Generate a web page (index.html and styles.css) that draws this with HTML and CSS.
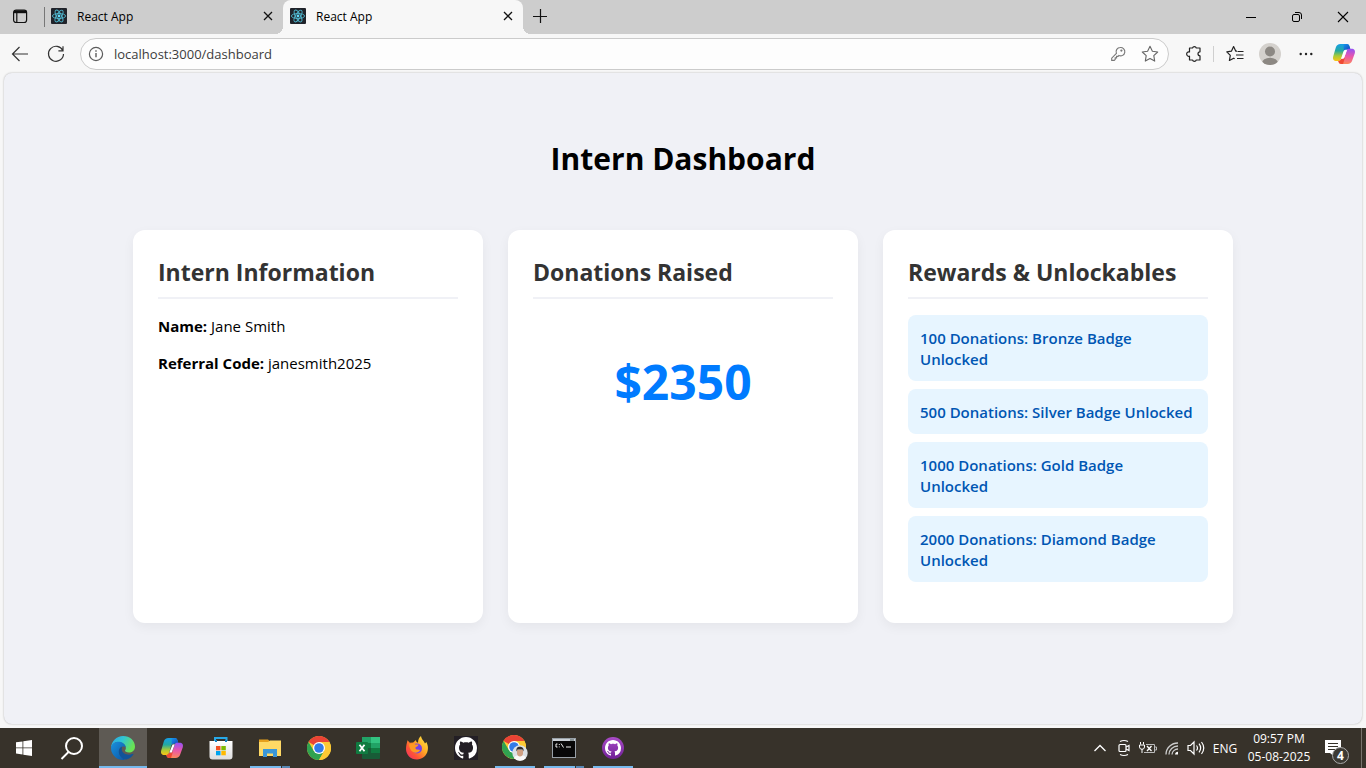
FILE: index.html
```html
<!DOCTYPE html>
<html lang="en">
<head>
<meta charset="utf-8">
<meta name="viewport" content="width=device-width, initial-scale=1">
<title>React App</title>
<link rel="stylesheet" href="styles.css">
</head>
<body>
<svg class="defs" width="0" height="0" aria-hidden="true">
  <defs>
    <linearGradient id="cp-left" x1="0" y1="0" x2="0" y2="1"><stop offset="0" stop-color="#169fe8"/><stop offset=".4" stop-color="#24a9a0"/><stop offset=".7" stop-color="#a9cb37"/><stop offset="1" stop-color="#fbc516"/></linearGradient>
    <linearGradient id="cp-right" x1=".3" y1="0" x2=".2" y2="1"><stop offset="0" stop-color="#9b52f0"/><stop offset=".45" stop-color="#e856ac"/><stop offset="1" stop-color="#ff8a55"/></linearGradient>
    <linearGradient id="cp-top" x1="0" y1="0" x2="1" y2="1"><stop offset="0" stop-color="#1597ea"/><stop offset="1" stop-color="#153bbb"/></linearGradient>
    <linearGradient id="edge-blue" x1="0" y1="0" x2="1" y2="1"><stop offset="0" stop-color="#1a91dd"/><stop offset="1" stop-color="#0b56a6"/></linearGradient>
    <linearGradient id="edge-green" x1="0" y1="0" x2="1" y2=".4"><stop offset="0" stop-color="#2aa4e7"/><stop offset=".5" stop-color="#31c6d3"/><stop offset="1" stop-color="#69e354"/></linearGradient>
    <linearGradient id="fox-body" x1="1" y1="0" x2="0" y2="1"><stop offset="0" stop-color="#fff04d"/><stop offset=".4" stop-color="#ffab25"/><stop offset=".7" stop-color="#ff5435"/><stop offset="1" stop-color="#ef2671"/></linearGradient>
    <linearGradient id="gh-purple" x1="0" y1="0" x2="0" y2="1"><stop offset="0" stop-color="#a94bc8"/><stop offset="1" stop-color="#702096"/></linearGradient>
    <linearGradient id="store-bag" x1="0" y1="0" x2="0" y2="1"><stop offset="0" stop-color="#fff"/><stop offset="1" stop-color="#dddddd"/></linearGradient>
    <symbol id="react" viewBox="0 0 16 16">
      <rect width="16" height="16" rx="1" fill="#20232a"/>
      <g fill="none" stroke="#4fb5cc" stroke-width=".9"><ellipse cx="8" cy="8" rx="6.6" ry="2.5"/><ellipse cx="8" cy="8" rx="6.6" ry="2.5" transform="rotate(60 8 8)"/><ellipse cx="8" cy="8" rx="6.6" ry="2.5" transform="rotate(120 8 8)"/></g>
      <circle cx="8" cy="8" r="1.4" fill="#61dafb"/>
    </symbol>
    <symbol id="close" viewBox="0 0 10 10"><path d="M1 1l8 8M9 1L1 9" fill="none" stroke="#111" stroke-width="1.3"/></symbol>
    <symbol id="copilot" viewBox="0 0 24 24">
      <path d="M8.500 2h6.200c1.500 0 2.300.8 2.700 2l1 3.400h-4.200c-1.400 0-2.300.7-2.800 2.100L9 17c-.5 1.400-1.400 2-2.700 2H4.600C1.500 19 .5 17 1.200 14.500l2.600-9C4.500 3.200 6 2 8.500 2z" fill="url(#cp-left)"/>
      <path d="M11.500 2h3.200c1.500 0 2.300.8 2.700 2l1 3.400h-4.200c-1 0-1.900.5-2.400 1.400z" fill="url(#cp-top)"/>
      <path d="M15.500 22H9.300c-1.500 0-2.300-.8-2.700-2l-.3-1.100c1.300 0 2.200-.6 2.700-2h.8c1.400 0 2.300-.7 2.800-2.100L15 8c.4-1 1.200-1.300 2.300-1.300h2.100c3.100 0 4.100 2 3.400 4.500l-2.600 7.300C19.500 20.800 18 22 15.500 22z" fill="url(#cp-right)"/>
      <path d="M12.500 8.600l2.300-.3-3 8.300-2.600.2z" fill="#fff"/>
      <path d="M6.300 18.900c1.700 0 2.600-.7 3.100-2.100l1.900.1 1.600-1.300-1.800 6.400H9.300c-1.500 0-2.300-.8-2.700-2z" fill="#ef4934"/>
    </symbol>
    <symbol id="chrome" viewBox="0 0 24 24">
      <circle cx="12" cy="12" r="12" fill="#fcc934"/>
      <path d="M12 12L1.600 6A12 12 0 0 1 22.400 6H12z" fill="#ea4335"/>
      <path d="M1.600 6A12 12 0 0 0 12 24l5.200-9L12 12 6.800 15z" fill="#30a250"/>
      <path d="M12 6h10.400A12 12 0 0 1 12 24l5.200-9z" fill="#fcc934"/>
      <circle cx="12" cy="12" r="6" fill="#fff"/><circle cx="12" cy="12" r="4.800" fill="#327ae8"/>
    </symbol>
    <symbol id="github" viewBox="0 0 16 16"><path d="M8 0C3.580 0 0 3.580 0 8c0 3.540 2.290 6.530 5.470 7.590.4.070.55-.17.55-.38 0-.19-.01-.82-.01-1.490-2.010.37-2.530-.49-2.690-.94-.09-.23-.48-.94-.82-1.130-.28-.15-.68-.52-.01-.53.63-.01 1.080.58 1.230.82.72 1.210 1.870.87 2.330.66.07-.52.28-.87.51-1.070-1.780-.2-3.640-.89-3.640-3.950 0-.87.31-1.590.82-2.150-.08-.2-.36-1.020.08-2.120 0 0 .67-.21 2.200.82.64-.18 1.320-.27 2-.27s1.360.09 2 .27c1.530-1.040 2.200-.82 2.200-.82.44 1.100.16 1.920.08 2.120.51.56.82 1.270.82 2.150 0 3.070-1.870 3.750-3.650 3.950.29.25.54.73.54 1.480 0 1.070-.01 1.930-.01 2.200 0 .21.15.46.55.38A8.010 8.010 0 0 0 16 8c0-4.420-3.580-8-8-8z" fill="#fff"/></symbol>
  </defs>
</svg>

<div class="desktop">
  <header class="tab-strip">
    <button class="tab-menu" aria-label="Tab actions">
      <svg width="16" height="16" viewBox="0 0 16 16" fill="none" stroke="#111" stroke-width="1.200"><rect x="1.600" y="2" width="13" height="12.500" rx="2.500"/><path d="M2 3.700h12.200" stroke-width="3"/><path d="M4.800 5v9.500"/></svg>
    </button>
    <div class="tab">
      <svg width="16" height="16"><use href="#react"/></svg>
      <span class="tab-title">React App</span>
      <button class="tab-close" aria-label="Close tab"><svg width="10" height="10"><use href="#close"/></svg></button>
    </div>
    <div class="tab tab-active">
      <svg width="16" height="16"><use href="#react"/></svg>
      <span class="tab-title">React App</span>
      <button class="tab-close" aria-label="Close tab"><svg width="10" height="10"><use href="#close"/></svg></button>
    </div>
    <button class="new-tab" aria-label="New tab"><svg width="14" height="14" viewBox="0 0 14 14"><path d="M7.500 0v14M0 7.500h14" stroke="#111" stroke-width="1.200"/></svg></button>
    <div class="window-controls">
      <button aria-label="Minimize"><svg width="12" height="12" viewBox="0 0 12 12"><path d="M1 6.500h10" stroke="#000"/></svg></button>
      <button aria-label="Restore"><svg width="12" height="12" viewBox="0 0 12 12" fill="none" stroke="#000"><rect x="1.500" y="3.500" width="7" height="7" rx="1.500"/><path d="M4 1.500h4a2.500 2.500 0 0 1 2.500 2.500v4"/></svg></button>
      <button aria-label="Close"><svg width="12" height="12" viewBox="0 0 12 12"><path d="M1 1l10 10M11 1L1 11" stroke="#000" stroke-width="1.100"/></svg></button>
    </div>
  </header>

  <nav class="toolbar" aria-label="Browser toolbar">
    <button class="nav-button" aria-label="Back"><svg width="18" height="16" viewBox="0 0 18 16" fill="none" stroke="#333" stroke-width="1.200"><path d="M17 8H1.500M8.500 1l-7 7 7 7"/></svg></button>
    <button class="nav-button" aria-label="Refresh"><svg width="18" height="18" viewBox="0 0 18 18" fill="none" stroke="#333" stroke-width="1.200"><path d="M15.800 5.600A7.500 7.500 0 1 0 16.500 9M16 1.200v4.600h-4.600"/></svg></button>
    <div class="address-bar">
      <svg width="16" height="16" viewBox="0 0 16 16" fill="none" stroke="#5c5c5c" stroke-width="1.200"><circle cx="8" cy="8" r="6.600"/><path d="M8 7v4.300M8 4.300v1.500" stroke-width="1.400"/></svg>
      <input class="address-input" type="text" aria-label="Address" value="localhost:3000/dashboard">
      <button class="address-action" aria-label="Passwords"><svg width="16" height="16" viewBox="0 0 16 16" fill="none" stroke="#777" stroke-width="1.100"><path d="M10.200 1.500a4.200 4.200 0 1 1-1.300 8L8 10.400H6.600v1.500H5.200v1.500l-1 1H1.700v-2.300L6.400 7.300a4.200 4.200 0 0 1 3.800-5.800z"/><circle cx="11.400" cy="4.600" r=".6"/></svg></button>
      <button class="address-action" aria-label="Add to favorites"><svg width="18" height="18" viewBox="0 0 18 18" fill="none" stroke="#666" stroke-width="1.100" stroke-linejoin="round"><path d="M9 1.300l2.400 4.900 5.300.8-3.900 3.700.9 5.400L9 13.500l-4.700 2.600.9-5.400L1.300 7l5.300-.8z"/></svg></button>
    </div>
    <div class="toolbar-actions">
      <button class="tool" aria-label="Extensions"><svg width="18" height="18" viewBox="0 0 18 18" fill="none" stroke="#222" stroke-width="1.200" stroke-linejoin="round"><path d="M4.500 3h3a2 2 0 0 1 3.800 0H15v3.800a2 2 0 1 0 0 4V15h-3.700a2 2 0 0 1-3.800 0h-3v-3.800a2.200 2.200 0 1 1 0-4.200z"/></svg></button>
      <button class="tool tool-divided" aria-label="Favorites"><svg width="18" height="18" viewBox="0 0 18 18" fill="none" stroke="#222" stroke-width="1.200" stroke-linejoin="round"><path d="M11 6.200H9.800L7.600 1.500 5.400 6.200l-4.600.7 3.500 3.500-.9 5.100 4.300-2.300 1 .5M11.500 6.500h6M10 10h7.500M11 13.500h6.500"/></svg></button>
      <button class="tool" aria-label="Profile"><svg width="22" height="22" viewBox="0 0 22 22"><clipPath id="avatar"><circle cx="11" cy="11" r="11"/></clipPath><circle cx="11" cy="11" r="11" fill="#d4d1cd"/><g clip-path="url(#avatar)" fill="#8c8883"><circle cx="11" cy="8.500" r="5"/><ellipse cx="11" cy="20" rx="8" ry="5.300"/></g></svg></button>
      <button class="tool" aria-label="Settings and more"><svg width="14" height="14" viewBox="0 0 14 14" fill="#222"><circle cx="1.700" cy="7" r="1.200"/><circle cx="7" cy="7" r="1.200"/><circle cx="12.300" cy="7" r="1.200"/></svg></button>
      <button class="tool" aria-label="Copilot"><svg width="24" height="24"><use href="#copilot"/></svg></button>
    </div>
  </nav>

  <div class="viewport">
    <main class="dashboard">
      <h1 class="page-title">Intern Dashboard</h1>
      <div class="cards">
        <section class="card">
          <h2 class="card-title">Intern Information</h2>
          <p class="info"><strong>Name:</strong> Jane Smith</p>
          <p class="info"><strong>Referral Code:</strong> janesmith2025</p>
        </section>
        <section class="card">
          <h2 class="card-title">Donations Raised</h2>
          <p class="amount">$2350</p>
        </section>
        <section class="card">
          <h2 class="card-title">Rewards &amp; Unlockables</h2>
          <ul class="rewards">
            <li class="reward">100 Donations: Bronze Badge Unlocked</li>
            <li class="reward">500 Donations: Silver Badge Unlocked</li>
            <li class="reward">1000 Donations: Gold Badge<br>Unlocked</li>
            <li class="reward">2000 Donations: Diamond Badge Unlocked</li>
          </ul>
        </section>
      </div>
    </main>
  </div>

  <footer class="taskbar">
    <div class="launchers">
      <button class="launcher" aria-label="Start"><svg width="16" height="16" viewBox="0 0 16 16" fill="#fff"><path d="M0 2.300L6.500 1.400v6.100H0zM7.300 1.300L16 0v7.500H7.300zM0 8.300h6.500v6.100L0 13.500zM7.300 8.300H16V16l-8.700-1.300z"/></svg></button>
      <button class="launcher" aria-label="Search"><svg width="24" height="24" viewBox="0 0 24 24" fill="none" stroke="#fff" stroke-width="2"><circle cx="14" cy="10" r="8"/><path d="M8.500 16L1.500 23"/></svg></button>
    </div>
    <div class="apps">
      <button class="launcher app-focused" aria-label="Microsoft Edge"><svg width="24" height="24" viewBox="0 0 24 24">
        <path d="M0 12C.3 5 5.500 0 12 0c7 0 12 4.800 12 10.500 0 4-3 6-6 6-2.800 0-4-1-4-1.900 0-.6.900-1 .9-2.600 0-3-3.300-6-7.900-6-3 0-5.500 1.700-7 6z" fill="url(#edge-green)"/>
        <path d="M0 12c.6-4 3.500-6.200 7.500-6.200 4 0 7 2.700 7.200 5.500C13.500 9.800 9 9.800 8 14c-.8 4 2.200 7.500 6 9.800A12 12 0 0 1 0 12z" fill="url(#edge-blue)"/>
        <path d="M11 10.500c-2.600 1.300-3.700 4-3 6.800.8 3.400 4 6.700 7.500 6.200 3-.8 5-2.500 6.900-5.100.3-.5-.1-.9-.6-.6-4.600 2.200-10.700.2-11-4.300 0-1.300.3-2.200.2-3z" fill="#115499"/>
      </svg></button>
      <button class="launcher" aria-label="Copilot"><svg width="24" height="24"><use href="#copilot"/></svg></button>
      <button class="launcher" aria-label="Microsoft Store"><svg width="24" height="24" viewBox="0 0 24 24"><path d="M6 6V2h11.500v4" fill="none" stroke="#27a9e7" stroke-width="2"/><path d="M.5 5h23v15.500a3 3 0 0 1-3 3h-17a3 3 0 0 1-3-3z" fill="url(#store-bag)"/><path d="M6 4h2v2H6zM16 4h2v2h-2z" fill="#1685c4"/><path d="M7 10h4.500v4.300H7z" fill="#f25022"/><path d="M12.300 10h4.500v4.300h-4.500z" fill="#7fba00"/><path d="M7 15h4.500v4.300H7z" fill="#00a4ef"/><path d="M12.300 15h4.500v4.300h-4.500z" fill="#ffb900"/></svg></button>
      <button class="launcher app-open app-stacked" aria-label="File Explorer"><svg width="24" height="24" viewBox="0 0 24 24"><path d="M1 3.500h9l2 2v3H1z" fill="#e6a01c"/><path d="M1 6h9l2-1.500h11v15.500H1z" fill="#ffd965"/><path d="M5 13h14v8h-4v-3.500H9V21H5z" fill="#3b97d8"/></svg></button>
      <button class="launcher" aria-label="Google Chrome"><svg width="24" height="24"><use href="#chrome"/></svg></button>
      <button class="launcher" aria-label="Excel"><svg width="24" height="24" viewBox="0 0 24 24"><rect x="6" y="1" width="18" height="22" rx="1" fill="#185c37"/><path d="M6 1h9v6H6z" fill="#21a366"/><path d="M15 1h9v6h-9z" fill="#33c481"/><path d="M6 7h9v5H6z" fill="#107c41"/><path d="M15 7h9v5h-9z" fill="#21a366"/><path d="M15 12h9v5h-9z" fill="#107c41"/><rect y="6" width="12" height="12" rx="1" fill="#107c41"/><path d="M3.500 8.700l5 6.600M8.500 8.700l-5 6.600" stroke="#fff" stroke-width="1.800"/></svg></button>
      <button class="launcher" aria-label="Firefox"><svg width="24" height="24" viewBox="0 0 24 24"><path d="M2.500 4.200l2.300 2.500 3.400-.2L11 4c0 1.500.6 2.200 2 2.700C13.200 3.500 14 1.600 16 0c.6 3.600 2.800 4.400 4 7.500l1.400-1.500c1.500 3 1.800 5.500 1.400 8C21.800 20 17 23.500 12 23.500 5.500 23.500 1 18.700 1 13c0-3 .8-6 1.500-8.800z" fill="url(#fox-body)"/><circle cx="12" cy="12.500" r="5" fill="#7542e5"/><path d="M4 8.500c3-1.800 5-1 6.500 0h3c-.3 2-2.500 2-3 3-.2 1.500.5 2 2 2 1 0 1.800.3 2.600.5-1.600 3-5.600 3.500-8.100 1.300C5.500 14 4.500 12 4 8.500z" fill="#ff9a23"/></svg></button>
      <button class="launcher" aria-label="GitHub"><svg width="24" height="24" viewBox="0 0 24 24"><rect width="24" height="24" fill="#231f25"/><use href="#github" x="1" y="1" width="22" height="22"/></svg></button>
      <button class="launcher app-open" aria-label="Google Chrome profile"><svg width="26" height="26" viewBox="0 0 26 26"><use href="#chrome" width="24" height="24"/><circle cx="18" cy="18" r="7.700" fill="#dce1e5"/><path d="M12 23c.7-2.300 3-3 6-3s5 .7 6 3a7.700 7.700 0 0 1-12 0z" fill="#f9f9f9"/><path d="M15 15h6v3.500c0 4-6 4-6 0z" fill="#d0a184"/><path d="M14.500 16.500c-.6-4 1.500-5 4-4.700 2.400.2 3.500 2 3 4.700l-1-2h-5z" fill="#302b2b"/></svg></button>
      <button class="launcher app-open app-stacked" aria-label="Command Prompt"><svg width="24" height="20" viewBox="0 0 24 20"><rect x=".5" y=".5" width="23" height="19" fill="#080808" stroke="#98a0a7"/><path d="M1 1h22v2H1z" fill="#cbd1d6"/><path d="M18 2h4" stroke="#455" /><path d="M5.500 6H4v3h1.500M7.300 6v1M7.300 8.500v.8M9 5.500l2.500 4M14 9h5" fill="none" stroke="#eee"/></svg></button>
      <button class="launcher app-open" aria-label="GitHub Desktop"><svg width="24" height="24" viewBox="0 0 24 24"><circle cx="12" cy="12" r="11" fill="url(#gh-purple)"/><use href="#github" x="4" y="4" width="16" height="16"/></svg></button>
    </div>
    <div class="tray">
      <button class="tray-button" aria-label="Show hidden icons"><svg width="14" height="14" viewBox="0 0 14 14"><path d="M1.500 10L7 4.500l5.500 5.500" fill="none" stroke="#fff" stroke-width="1.300"/></svg></button>
      <button class="tray-button" aria-label="Meet Now"><svg width="16" height="18" viewBox="0 0 16 18" fill="none" stroke="#fff" stroke-width="1.200"><rect x="3" y="5.500" width="7" height="7" rx="1"/><path d="M10 8l3-1.500v5L10 10M4 2.500Q8 .500 12 2.500M4 15.500q4 2 8 0"/></svg></button>
      <button class="tray-button" aria-label="Battery"><svg width="18" height="14" viewBox="0 0 18 14" fill="none" stroke="#fff"><path d="M1.500 1v2.500M4.500 1v2.500M.5 4h5v2A2.500 2.500 0 0 1 3 8.300 2.500 2.500 0 0 1 .5 6zM3 8v4"/><path d="M7 3.500h8.500v8H5M16 6h1.500v3H16" stroke="#bbb"/><path d="M8 5l4.500 5M12.500 5L8 10" stroke-width="1.300"/></svg></button>
      <button class="tray-button" aria-label="Network"><svg width="16" height="16" viewBox="0 0 16 16" fill="none"><path d="M2 14.500C2 8 7.500 3 14 3M5 14.500C5 10 9 6 14 6M8 14.500c0-3 2.800-5.500 6-5.500" stroke="#ccc" stroke-width="1.300"/><path d="M11 14.500c0-1.500 1.300-2.700 3-2.700v2.700z" fill="#fff"/></svg></button>
      <button class="tray-button" aria-label="Volume"><svg width="18" height="16" viewBox="0 0 18 16" fill="none" stroke="#fff" stroke-width="1.200"><path d="M1 5.500h2.500L7 2v12l-3.500-3.500H1zM9.500 5.500q2 2.500 0 5M12 3.700q3.300 4.300 0 8.600M14.500 2q4.500 6 0 12"/></svg></button>
      <button class="language">ENG</button>
      <button class="clock"><span>09:57 PM</span><span>05-08-2025</span></button>
      <button class="notifications" aria-label="4 notifications"><svg width="16" height="16" viewBox="0 0 16 16"><path d="M0 0h16v13H8.500v3L5 13H0z" fill="#fff"/><path d="M3 3.500h10M3 6.500h10M3 9.500h7" stroke="#36322a"/></svg><span class="badge">4</span></button>
    </div>
  </footer>
</div>
</body>
</html>
```
FILE: styles.css
```css
* {
  box-sizing: border-box;
}

body {
  margin: 0;
  font-family: "Open Sans", "Noto Sans", sans-serif;
  color: #000;
  background: #f7f7f7;
}

button {
  display: flex;
  align-items: center;
  justify-content: center;
  padding: 0;
  border: 0;
  background: none;
  color: inherit;
  font: inherit;
}

svg {
  display: block;
  flex-shrink: 0;
}

.defs {
  position: absolute;
}

.desktop {
  display: flex;
  flex-direction: column;
  min-height: 100vh;
}

/* Tab strip */
.tab-strip {
  display: flex;
  height: 34px;
  background: #cdcdcd;
}

.tab-menu {
  width: 44px;
  padding-right: 4px;
  height: 32px;
}

.tab {
  display: flex;
  align-items: center;
  gap: 10px;
  width: 239px;
  height: 34px;
  padding: 0 9px 2px 7px;
  font-size: 12px;
}

.tab:not(.tab-active) {
  background: linear-gradient(#777, #777) 0 7px / 1px 20px no-repeat;
}

.tab-title {
  flex: 1;
}

.tab-close {
  width: 12px;
  height: 16px;
}

.tab-active {
  position: relative;
  width: 240px;
  border-radius: 8px 8px 0 0;
  background: #f7f7f7;
}

.tab-active::before,
.tab-active::after {
  content: "";
  position: absolute;
  bottom: 0;
  width: 8px;
  height: 8px;
}

.tab-active::before {
  right: 100%;
  background: radial-gradient(circle at 0 0, transparent 8px, #f7f7f7 8px);
}

.tab-active::after {
  left: 100%;
  background: radial-gradient(circle at 100% 0, transparent 8px, #f7f7f7 8px);
}

.new-tab {
  width: 34px;
  height: 32px;
}

.window-controls {
  display: flex;
  margin-left: auto;
}

.window-controls button {
  width: 46px;
}

/* Toolbar */
.toolbar {
  display: flex;
  align-items: center;
  height: 39px;
  padding: 0 4px 0 2px;
}

.nav-button {
  width: 36px;
  height: 32px;
}

.address-bar {
  display: flex;
  flex: 1;
  align-items: center;
  height: 32px;
  margin-left: 6px;
  padding: 0 2px 0 7px;
  border: 1px solid #cbcbcb;
  border-radius: 16px;
  background: #fdfdfd;
}

.address-input {
  flex: 1;
  min-width: 0;
  padding: 0 0 0 10px;
  border: 0;
  outline: 0;
  background: none;
  color: #3c3c3c;
  font-family: inherit;
  font-size: 13px;
}

.address-action {
  width: 32px;
  height: 30px;
}

.toolbar-actions {
  display: flex;
  align-items: center;
  padding-left: 7px;
}

.tool {
  width: 36px;
  height: 32px;
}

.tool:first-child {
  width: 37px;
  padding-right: 2px;
}

.tool:last-child {
  width: 38px;
  padding-left: 2px;
}

.tool-divided {
  width: 39px;
  padding-left: 5px;
  background: linear-gradient(#cfcfcf, #cfcfcf) 0 8px / 1px 16px no-repeat;
}

/* Page */
.viewport {
  flex: 1;
  margin: 0 4px 4px;
  padding: 62px 20px;
  border-radius: 8px;
  background: #f0f1f6;
  box-shadow: 0 0 2px rgba(0, 0, 0, 0.3);
}

.dashboard {
  max-width: 1100px;
  margin: 0 auto;
}

.page-title {
  margin: 0 0 47px;
  text-align: center;
  font-size: 30px;
  line-height: 48px;
  font-weight: 700;
}

.cards {
  display: grid;
  grid-template-columns: repeat(3, 1fr);
  gap: 25px;
}

.card {
  min-width: 0;
  padding: 25px;
  border-radius: 12px;
  background: #fff;
  box-shadow: 0 4px 12px rgba(0, 0, 0, 0.05);
}

.card-title {
  margin: 0 0 16px;
  padding-bottom: 8px;
  border-bottom: 2px solid #f0f1f6;
  color: #333;
  font-size: 23px;
  line-height: 34px;
  font-weight: 700;
}

.info {
  margin: 0 0 15px;
  font-size: 15px;
  line-height: 22px;
}

.amount {
  margin: 51px 0;
  color: #007bff;
  text-align: center;
  font-size: 48px;
  line-height: 64px;
  font-weight: 700;
}

.rewards {
  display: grid;
  gap: 8px;
  margin: 0 0 16px;
  padding: 0;
  list-style: none;
}

.reward {
  padding: 13px 12px 11px;
  border-radius: 8px;
  background: #e7f5ff;
  color: #0056b3;
  font-size: 15px;
  line-height: 21px;
  font-weight: 600;
}

/* Taskbar */
.taskbar {
  display: flex;
  height: 40px;
  background: #37322a;
  color: #fff;
  font-size: 12px;
}

.launchers,
.apps,
.tray {
  display: flex;
}

.apps {
  gap: 1px;
  margin-left: 3px;
}

.launcher {
  width: 48px;
  height: 40px;
}

.app-focused {
  background: linear-gradient(#76b9ed, #76b9ed) bottom / 100% 2px no-repeat #5e5a54;
}

.app-open {
  background: linear-gradient(#76b9ed, #76b9ed) bottom / 40px 2px no-repeat;
}

.app-stacked {
  background-image: linear-gradient(90deg, #76b9ed 31px, #37322a 31px, #37322a 32px, #5888b4 32px);
}

.tray {
  margin-left: auto;
}

.tray-button {
  width: 24px;
}

.language {
  width: 34px;
}

.clock {
  flex-direction: column;
  width: 74px;
  line-height: 18px;
}

.notifications {
  position: relative;
  width: 46px;
  margin-right: 4px;
  padding-right: 12px;
  border-right: 1px solid #77736d;
}

.badge {
  position: absolute;
  right: 12px;
  bottom: 4px;
  width: 17px;
  height: 17px;
  border: 1px solid #aaa;
  border-radius: 50%;
  background: #3d3a34;
  font-size: 12px;
  line-height: 15px;
  font-weight: 700;
}
```
